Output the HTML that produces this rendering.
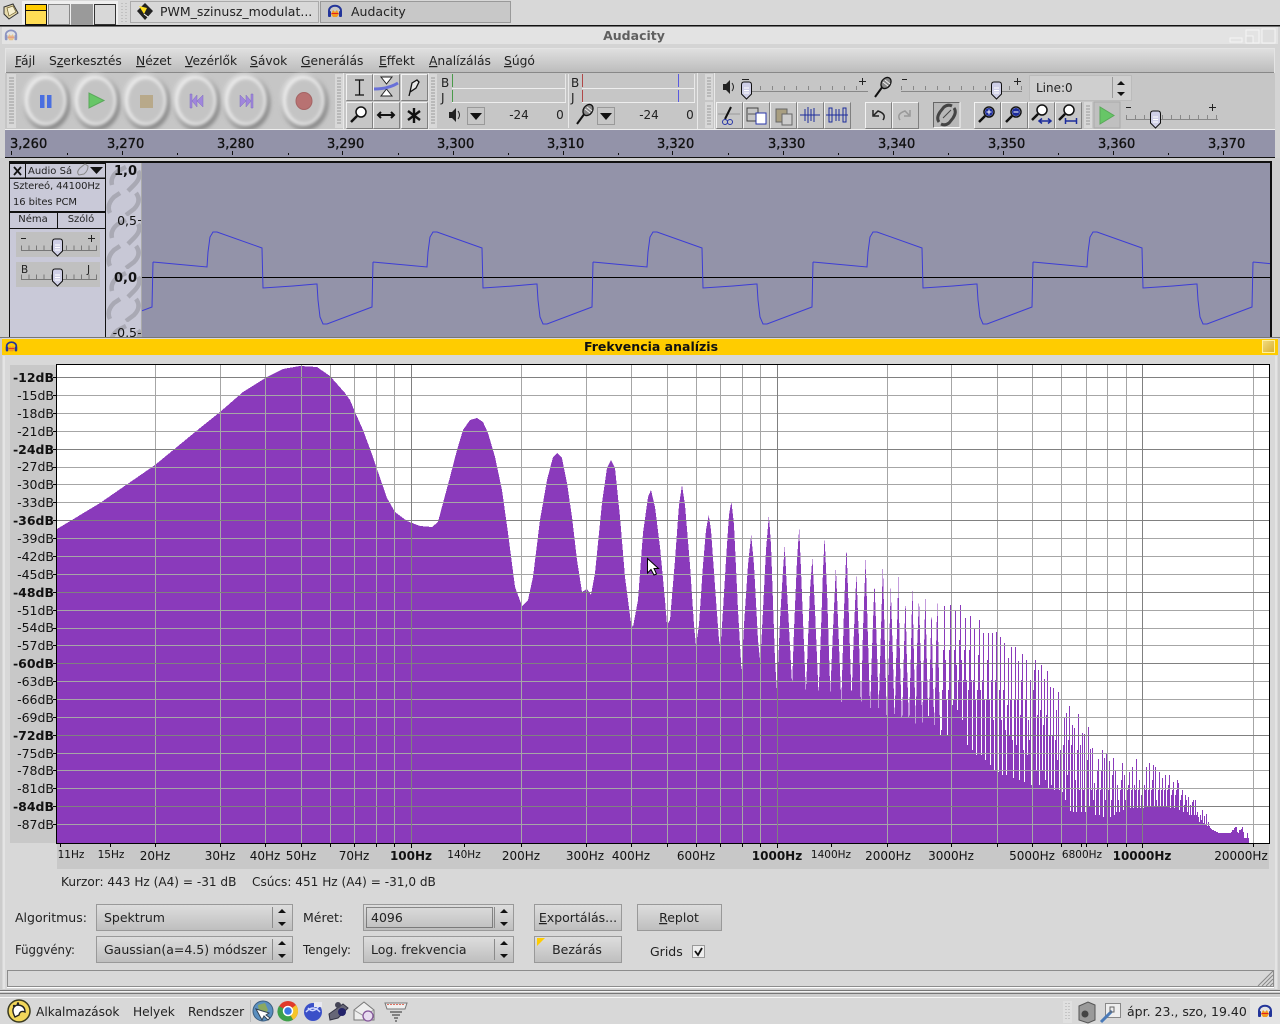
<!DOCTYPE html>
<html><head><meta charset="utf-8"><title>Audacity</title>
<style>html,body{margin:0;padding:0;background:#d8d8d8;overflow:hidden}svg{display:block}text{font-family:"DejaVu Sans","Liberation Sans",sans-serif}</style></head>
<body>
<svg xmlns="http://www.w3.org/2000/svg" width="1280" height="1024" viewBox="0 0 1280 1024" font-size="13" fill="#222">
<defs>
<linearGradient id="g" x1="0" y1="0" x2="0" y2="1"><stop offset="0" stop-color="#dedede"/><stop offset="1" stop-color="#bebebe"/></linearGradient>
<linearGradient id="gm" x1="0" y1="0" x2="0" y2="1"><stop offset="0" stop-color="#e0e0e0"/><stop offset="1" stop-color="#bcbcbc"/></linearGradient>
<linearGradient id="gy" x1="0" y1="0" x2="1" y2="1"><stop offset="0" stop-color="#f2dc80"/><stop offset="1" stop-color="#d8b030"/></linearGradient>
<filter id="bl" x="-30%" y="-30%" width="160%" height="160%"><feGaussianBlur stdDeviation="2"/></filter>
<filter id="bs" x="-30%" y="-30%" width="160%" height="160%"><feGaussianBlur stdDeviation="1.500"/></filter>
<symbol id="rnd" width="56" height="60" overflow="visible"><ellipse cx="29" cy="32" rx="23" ry="27" fill="#7c7c7c" filter="url(#bl)"/><ellipse cx="27" cy="29" rx="22" ry="26" fill="#ececec" filter="url(#bl)"/><ellipse cx="28" cy="30" rx="18" ry="22" fill="#c4c4c4" filter="url(#bs)"/></symbol>
<symbol id="b" width="27" height="27" overflow="visible"><rect width="26" height="26" fill="#c6c6c6"/><path d="M.5 26V.5H26" fill="none" stroke="#f2f2f2"/><path d="M.5 26.5H26.5V.5" fill="none" stroke="#808080"/></symbol>
<symbol id="th" width="14" height="20" overflow="visible"><path d="M1.500 4Q1.500 1 4 1H9Q11.500 1 11.500 4V13L6.500 18L1.500 13Z" fill="#cfcfe6" stroke="#111"/><path d="M4 7H9M4 9.500H9M4 12H9" stroke="#fff"/></symbol>
<symbol id="dd" width="18" height="18" overflow="visible"><rect x=".5" y=".5" width="17" height="17" fill="#c6c6c6" stroke="#999"/><path d="M3 6H15L9 13Z" fill="#111"/></symbol>
<symbol id="aud" viewBox="0 0 16 16" overflow="visible"><path d="M2 12V8C2 1 14 1 14 8V12" fill="none" stroke="#23359a" stroke-width="2"/><rect x="1" y="8" width="3" height="6" rx="1" fill="#23359a"/><rect x="12" y="8" width="3" height="6" rx="1" fill="#23359a"/><path d="M4 11L6 7L8 9L10 7L12 11L10 14H6Z" fill="#f09a20"/><path d="M4.500 10.500H11.500" stroke="#e02020"/></symbol>
<symbol id="zm" width="20" height="20" overflow="visible"><circle cx="12" cy="7" r="5" fill="#fff" stroke="#111" stroke-width="1.500"/><path d="M8 11L2 17" stroke="#111" stroke-width="2.500"/></symbol>
<symbol id="mic" width="20" height="22" overflow="visible"><path d="M1 20L9 9" stroke="#111" stroke-width="2"/><ellipse cx="12" cy="6" rx="4.500" ry="6" transform="rotate(35 12 6)" fill="#888" stroke="#111" stroke-width="1.300"/><path d="M9 5L14 9M11 3L16 7" stroke="#eee"/></symbol>
<symbol id="arr" width="12" height="16" overflow="visible"><path d="M.5 .5V15L4 11.500L7 17L9.500 16L7 10.500H11.500Z" fill="#fff" stroke="#000"/></symbol>
<pattern id="ch" width="35" height="53" patternUnits="userSpaceOnUse" x="106" y="163"><rect width="35" height="53" fill="#c8c8d6"/><g fill="none" stroke="#a9a9b4" stroke-width="4.500"><path d="M6 22Q4 14 12 8L20 4M32 8Q36 14 28 22L22 28"/><path d="M4 50Q0 42 8 34L14 30M30 30Q36 38 28 46L20 52"/></g></pattern>
<clipPath id="wc"><rect x="142" y="163" width="1128" height="175"/></clipPath>
</defs>

<rect width="1280" height="1024" fill="#d8d8d8"/>

<!-- top panel -->
<rect x="0" y="0" width="1280" height="25" fill="#d8d8d8"/>
<path d="M4 7L13 4L18 13L9 19L4 14Z" fill="#e8dcae" stroke="#333"/><path d="M7 8L13 6L16 12L9 16Z" fill="#f6efce" stroke="#6b5c2a" stroke-width=".7"/>
<rect x="22" y="1" width="96" height="23" fill="#efefef"/>
<rect x="25.500" y="4.500" width="21" height="20" fill="#ffdd55" stroke="#111"/><rect x="25.500" y="4.500" width="21" height="6" fill="#ffcc00" stroke="#111"/>
<rect x="48.500" y="4.500" width="21" height="20" fill="#d8d8d8" stroke="#888"/>
<rect x="71" y="4" width="22" height="21" fill="#9a9a9a"/>
<rect x="94.500" y="4.500" width="21" height="20" fill="#d8d8d8" stroke="#333"/>
<path d="M122 3v20M126 3v20" stroke="#aaa" stroke-dasharray="1 2"/>
<rect x="130.500" y="1.500" width="188" height="21" fill="#d8d8d8" stroke="#aaa"/>
<path d="M145 3L153 11L145 20L137 11Z" fill="#222"/><path d="M139 6L147 8L144 14Z" fill="#ffe020"/><path d="M144 14L148 17" stroke="#fff"/>
<text x="160" y="16" font-size="12.500">PWM_szinusz_modulat...</text>
<rect x="320.500" y="1.500" width="190" height="21" fill="#c8c8c8" stroke="#999"/>
<use href="#aud" x="327" y="3" width="16" height="16"/>
<text x="351" y="16" font-size="12.500">Audacity</text>

<!-- main window -->
<rect x="0" y="25" width="1280" height="1.500" fill="#111"/>
<rect x="0" y="27" width="1280" height="311" fill="#d4d4d4"/>
<rect x="2" y="27" width="1276" height="17" fill="#e3e3e3"/>
<use href="#aud" x="4" y="28" width="14" height="14" opacity=".45"/>
<text x="634" y="40" text-anchor="middle" font-weight="bold" font-size="12.500" fill="#606060">Audacity</text>
<rect x="1230" y="38" width="12" height="4" fill="none" stroke="#f4f4f4"/><rect x="1246" y="30" width="13" height="13" fill="none" stroke="#f4f4f4"/><rect x="1246" y="36" width="7" height="7" fill="#ddd" stroke="#f4f4f4"/><rect x="1262" y="29" width="13" height="14" fill="#dedede" stroke="#f4f4f4"/>

<rect x="5.500" y="48.500" width="1269" height="24" fill="url(#gm)" stroke="#e4e4e4"/>
<path d="M6 72.500H1274" stroke="#888"/>
<g font-size="12.300" fill="#222">
<text x="15" y="65"><tspan text-decoration="underline">F</tspan>ájl</text>
<text x="49" y="65">S<tspan text-decoration="underline">z</tspan>erkesztés</text>
<text x="136" y="65"><tspan text-decoration="underline">N</tspan>ézet</text>
<text x="185" y="65"><tspan text-decoration="underline">V</tspan>ezérlők</text>
<text x="250" y="65"><tspan text-decoration="underline">S</tspan>ávok</text>
<text x="301" y="65"><tspan text-decoration="underline">G</tspan>enerálás</text>
<text x="379" y="65"><tspan text-decoration="underline">E</tspan>ffekt</text>
<text x="429" y="65"><tspan text-decoration="underline">A</tspan>nalízálás</text>
<text x="504" y="65"><tspan text-decoration="underline">S</tspan>úgó</text>
</g>

<!-- toolbars -->
<rect x="5" y="73" width="1270" height="56" fill="#c6c6c6"/>
<g fill="none" stroke="#e8e8e8"><path d="M343.500 73V129M428.500 73V129M697.500 73V129M714.500 73V129"/></g>
<g>
<rect x="7" y="74" width="9" height="54" fill="#d8d8d8"/><path d="M9 78H14M9 81H14M9 84H14M9 87H14M9 90H14M9 93H14M9 96H14M9 99H14M9 102H14M9 105H14M9 108H14M9 111H14M9 114H14M9 117H14M9 120H14M9 123H14" stroke="#9a9a9a"/>
<rect x="335" y="74" width="8" height="54" fill="#d8d8d8"/><path d="M337 78H341M337 81H341M337 84H341M337 87H341M337 90H341M337 93H341M337 96H341M337 99H341M337 102H341M337 105H341M337 108H341M337 111H341M337 114H341M337 117H341M337 120H341M337 123H341" stroke="#9a9a9a"/>
<rect x="429" y="74" width="8" height="54" fill="#d8d8d8"/><path d="M431 78H435M431 81H435M431 84H435M431 87H435M431 90H435M431 93H435M431 96H435M431 99H435M431 102H435M431 105H435M431 108H435M431 111H435M431 114H435M431 117H435M431 120H435M431 123H435" stroke="#9a9a9a"/>
<rect x="705" y="74" width="8" height="26" fill="#d8d8d8"/><path d="M707 78H711M707 81H711M707 84H711M707 87H711M707 90H711M707 93H711M707 96H711" stroke="#9a9a9a"/>
<rect x="705" y="102" width="8" height="26" fill="#d8d8d8"/><path d="M707 106H711M707 109H711M707 112H711M707 115H711M707 118H711M707 121H711M707 124H711" stroke="#9a9a9a"/>
<rect x="1084" y="102" width="8" height="26" fill="#d8d8d8"/><path d="M1086 106H1090M1086 109H1090M1086 112H1090M1086 115H1090M1086 118H1090M1086 121H1090M1086 124H1090" stroke="#9a9a9a"/>
</g>
<!-- transport -->
<use href="#rnd" x="18" y="71"/><use href="#rnd" x="68" y="71"/><use href="#rnd" x="118" y="71"/><use href="#rnd" x="168" y="71"/><use href="#rnd" x="218" y="71"/><use href="#rnd" x="276" y="71"/>
<rect x="40" y="95" width="4.500" height="13" fill="#4a6fe0"/><rect x="47" y="95" width="4.500" height="13" fill="#4a6fe0"/>
<path d="M89 93V108L104 100.500Z" fill="#67c667" stroke="#5aa85a"/>
<rect x="140" y="95" width="13" height="13" fill="#b8a98a"/>
<path d="M190 94V108H192V94ZM192 101L197 95V107ZM197 101L203 95V107Z" fill="#a086dc" stroke="#7f6cc0" stroke-width=".5"/>
<path d="M253 94V108H251V94ZM251 101L246 95V107ZM246 101L240 95V107Z" fill="#a086dc" stroke="#7f6cc0" stroke-width=".5"/>
<ellipse cx="304" cy="101" rx="8" ry="8.500" fill="#b87272" stroke="#a56464"/>
<!-- tools -->
<use href="#b" x="346" y="74"/><use href="#b" x="373" y="74"/><use href="#b" x="401" y="74"/><use href="#b" x="346" y="102"/><use href="#b" x="373" y="102"/><use href="#b" x="401" y="102"/>
<path d="M355 80H364M355 95H364M359.500 80V95" stroke="#111" stroke-width="1.300" fill="none"/>
<path d="M381 77H392L386.500 84ZM381 96H392L386.500 89Z" fill="#fff" stroke="#222"/><path d="M374 89C382 89 390 88 398 83" stroke="#6870d8" stroke-width="3" fill="none"/>
<path d="M410 92L412 83L417 80L419 82L416 88ZM410 92L409 96" fill="#e8e8e8" stroke="#111" stroke-width="1.300"/>
<use href="#zm" x="349" y="105"/>
<path d="M378 115H394M381 112L378 115L381 118M391 112L394 115L391 118" stroke="#111" stroke-width="2" fill="none"/>
<path d="M414 108V123M408 111L420 120M420 111L408 120" stroke="#111" stroke-width="2.400"/>
<!-- meters -->
<text x="441" y="87" font-size="12">B</text><text x="441" y="102" font-size="12">J</text>
<text x="571" y="87" font-size="12">B</text><text x="571" y="102" font-size="12">J</text>
<path d="M452 88.500H566M452 102.500H566M582 88.500H695M582 102.500H695" stroke="#eee"/>
<path d="M452.500 74V87M452.500 90V102" stroke="#4a9a4a"/><path d="M582.500 74V87M582.500 90V102" stroke="#b04848"/><path d="M678.500 74V87M678.500 90V102" stroke="#5a5ae0"/>
<path d="M565.500 74V102M694.500 74V102M568.500 74V128" stroke="#e8e8e8"/>
<path d="M449 112H452L456 108V122L452 118H449Z" fill="#222"/><path d="M458 111Q461 115 458 119" stroke="#222" fill="none"/>
<use href="#dd" x="467" y="107"/>
<text x="519" y="119" text-anchor="middle" font-size="12">-24</text><text x="560" y="119" text-anchor="middle" font-size="12">0</text>
<use href="#mic" x="576" y="104"/>
<use href="#dd" x="597" y="107"/>
<text x="649" y="119" text-anchor="middle" font-size="12">-24</text><text x="690" y="119" text-anchor="middle" font-size="12">0</text>
<!-- mixer -->
<path d="M723 84H726L730 80V94L726 90H723Z" fill="#222"/><path d="M732 83Q735 87 732 91" stroke="#222" fill="none"/>
<path d="M748 91.500H868M901 91.500H1022" stroke="#888"/><path d="M748 88H868M901 88H1022" stroke="#888" stroke-dasharray="1 11" stroke-width="4"/>
<path d="M742 79.500H749M859 81.500H866M862.500 78V85M902 79.500H907M1014 81.500H1021M1017.500 78V85" stroke="#222"/>
<use href="#th" x="740" y="81"/><use href="#th" x="990" y="81"/>
<use href="#mic" x="874" y="77"/>
<rect x="1029.500" y="75.500" width="102" height="25" fill="#cfcfcf" stroke="#bbb"/><path d="M1112.500 77V98" stroke="#999"/>
<text x="1036" y="92" font-size="12">Line:0</text>
<path d="M1117 85L1121 81L1125 85ZM1117 92L1121 96L1125 92Z" fill="#111"/>
<!-- edit toolbar -->
<use href="#b" x="716" y="102"/><use href="#b" x="743" y="102"/><use href="#b" x="770" y="102"/><use href="#b" x="797" y="102"/><use href="#b" x="824" y="102"/>
<use href="#b" x="865" y="102"/><use href="#b" x="892" y="102"/>
<use href="#b" x="974" y="102"/><use href="#b" x="1001" y="102"/><use href="#b" x="1028" y="102"/><use href="#b" x="1055" y="102"/>
<rect x="933" y="102" width="27" height="26" fill="#b8b8b8"/><path d="M933.500 128V102.500H960" stroke="#666" fill="none"/><path d="M933.500 127.500H960V102" stroke="#f4f4f4" fill="none"/>
<path d="M718 114H740" stroke="#999"/><path d="M731 107L725 119" stroke="#111" stroke-width="2"/><circle cx="725" cy="122" r="2.500" fill="none" stroke="#2836a8"/><circle cx="730" cy="122" r="2.500" fill="none" stroke="#2836a8"/>
<rect x="747" y="108" width="11" height="13" fill="#c6c6c6" stroke="#444"/><path d="M748 114H757" stroke="#555"/><rect x="756" y="113" width="10" height="11" fill="#fff" stroke="#2836a8"/>
<rect x="776" y="109" width="11" height="13" fill="#a89e80" stroke="#666"/><rect x="782" y="114" width="10" height="11" fill="#ccc" stroke="#666"/>
<path d="M800 115H820M805 109V121M808 107V123M811 109V121M814 108V122" stroke="#1c2c9c"/>
<path d="M826 115H848M829 108V122H832V108ZM843 108V122H846V108ZM836 109V121M839 109V121" stroke="#1c2c9c" fill="none"/>
<path d="M883 120Q887 114 878 111L874 115M873 110V116H879" fill="none" stroke="#222" stroke-width="1.500"/>
<path d="M900 120Q896 114 905 111L909 115M910 110V116H904" fill="none" stroke="#999" stroke-width="1.500"/>
<g fill="none" stroke="#444" stroke-width="3"><path d="M939 122Q936 118 940 112L944 107Q948 104 952 106"/><path d="M954 108Q957 112 953 118L949 123Q945 126 941 124"/><path d="M943 118L951 110" stroke-width="1"/></g>
<use href="#zm" x="977" y="105"/><circle cx="989" cy="112" r="4" fill="#1c2c9c"/><path d="M986.500 112H991.500M989 109.500V114.500" stroke="#fff"/>
<use href="#zm" x="1004" y="105"/><circle cx="1016" cy="112" r="4" fill="#1c2c9c"/><path d="M1013.500 112H1018.500" stroke="#fff"/>
<use href="#zm" x="1030" y="103"/><path d="M1039 121H1051M1042 118.500L1039 121L1042 123.500M1048 118.500L1051 121L1048 123.500" stroke="#1c2c9c" fill="none" stroke-width="1.500"/>
<use href="#zm" x="1057" y="103"/><path d="M1065 121H1077M1065.500 118V124M1076.500 118V124" stroke="#1c2c9c" fill="none" stroke-width="1.500"/>
<rect x="1094" y="102" width="26" height="26" fill="#c0c0c0" stroke="#aaa"/>
<path d="M1100 107V124L1114 115.500Z" fill="#67c667" stroke="#59a859"/>
<path d="M1126 119.500H1218" stroke="#888"/><path d="M1126 117H1218" stroke="#888" stroke-dasharray="1 8" stroke-width="4"/>
<path d="M1126 107.500H1131M1209 107.500H1216M1212.500 104V111" stroke="#222"/>
<use href="#th" x="1149" y="110"/>

<!-- time ruler -->
<rect x="5" y="130" width="1270" height="27" fill="#9393a9"/>
<path d="M5 129.500H1275" stroke="#eee"/>
<g fill="#111" stroke="#111" stroke-width=".35">
<text x="10" y="148">3,260</text><text x="107" y="148">3,270</text><text x="217" y="148">3,280</text><text x="327" y="148">3,290</text><text x="437" y="148">3,300</text><text x="547" y="148">3,310</text><text x="657" y="148">3,320</text><text x="768" y="148">3,330</text><text x="878" y="148">3,340</text><text x="988" y="148">3,350</text><text x="1098" y="148">3,360</text><text x="1208" y="148">3,370</text>
</g>
<path d="M11.500 151V155M122.500 151V155M232.500 151V155M342.500 151V155M453.500 151V155M563.500 151V155M672.500 151V155M783.500 151V155M893.500 151V155M1003.500 151V155M1113.500 151V155M1223.500 151V155M67.500 153V155M177.500 153V155M288.500 153V155M398.500 153V155M508.500 153V155M618.500 153V155M728.500 153V155M838.500 153V155M948.500 153V155M1058.500 153V155M1168.500 153V155" stroke="#111"/>
<rect x="5" y="157" width="1270" height="1.500" fill="#111"/>
<rect x="0" y="158" width="1280" height="180" fill="#cfcfcf"/>

<!-- track -->
<rect x="9" y="161" width="1263" height="177" fill="#111"/>
<rect x="10" y="164" width="15" height="13.500" fill="#c9c9d8"/><path d="M14 167L21 175M21 167L14 175" stroke="#111" stroke-width="1.800"/>
<rect x="26" y="164" width="79" height="13.500" fill="#c9c9d8"/><text x="28" y="174" font-size="10">Audio Sá</text>
<path d="M79 175Q76 172 80 168L85 164L88 166Q88 171 84 174Z" fill="none" stroke="#888"/><path d="M90 167H103L96.500 174Z" fill="#111"/>
<rect x="10" y="179" width="95" height="32" fill="#c9c9d8"/>
<text x="13" y="189" font-size="10" textLength="87">Sztereó, 44100Hz</text><text x="13" y="205" font-size="10" textLength="64">16 bites PCM</text>
<rect x="10" y="213" width="47" height="15" fill="#c9c9d8"/><rect x="58" y="213" width="47" height="15" fill="#c9c9d8"/>
<text x="33" y="222" text-anchor="middle" font-size="10">Néma</text><text x="81" y="222" text-anchor="middle" font-size="10">Szóló</text>
<rect x="10" y="229" width="95" height="109" fill="#c9c9d8"/>
<rect x="16" y="232" width="84" height="25" fill="#c0c0c0"/><rect x="16" y="262" width="84" height="25" fill="#c0c0c0"/>
<path d="M21 250.500H97M21 279.500H97" stroke="#777"/><path d="M21 248H97M21 277H97" stroke="#777" stroke-dasharray="1 6.500" stroke-width="5"/>
<path d="M21 238.500H26M88 238.500H95M91.500 235V242" stroke="#222"/>
<text x="21" y="273" font-size="10.500">B</text><text x="87" y="273" font-size="10.500">J</text>
<use href="#th" x="51" y="238"/><use href="#th" x="51" y="268"/>
<rect x="106" y="163" width="35.500" height="175" fill="url(#ch)"/>
<rect x="142" y="163" width="1128" height="175" fill="#9393a9"/>
<path d="M141.500 163V338" stroke="#aaa"/>
<g fill="#111"><text x="137" y="175" text-anchor="end" font-weight="bold" font-size="13" font-family="Liberation Serif">1,0</text><text x="137" y="225" text-anchor="end" font-size="12.500">0,5</text><text x="137" y="282" text-anchor="end" font-weight="bold" font-size="13">0,0</text><text x="137" y="337" text-anchor="end" font-size="12.500">-0,5</text></g>
<path d="M138 220.500H141M138 333.500H141" stroke="#222"/>
<path d="M142 277.500H1270" stroke="#000"/>
<g clip-path="url(#wc)" fill="none" stroke="#3c3cd6" stroke-width="1">
<path id="w" d="M153 262L207 267L208 252L210 237L213 232L217 232L262 248L263 288L293 286L316 284L317 284L318 300L320 317L323 324L327 324L372 307L373 262"/>
<use href="#w" x="-220"/><use href="#w" x="220"/><use href="#w" x="440"/><use href="#w" x="660"/><use href="#w" x="880"/><use href="#w" x="1100"/>
</g>

<!-- dialog -->
<rect x="0" y="337" width="1280" height="660" fill="#cccccc"/>
<rect x="2" y="338" width="1276" height="656" fill="#d8d8d8"/>
<path d="M0 337.500H1280" stroke="#777"/>
<rect x="2" y="339" width="1276" height="16" fill="#ffcc00"/>
<use href="#aud" x="5" y="340" width="13" height="13"/>
<text x="651" y="351" text-anchor="middle" font-weight="bold" font-size="12.500" fill="#111">Frekvencia analízis</text>
<rect x="1262.500" y="340.500" width="12" height="12" fill="url(#gy)" stroke="#fff2a0"/>
<path d="M4 356V990M1276 356V990" stroke="#f0f0f0" fill="none"/>

<!-- plot -->
<rect x="10" y="365" width="47" height="478" fill="#c8c8c8"/>
<rect x="57" y="844" width="1212" height="25" fill="#c8c8c8"/>
<rect x="57" y="365" width="1212" height="478" fill="#fff"/>
<path fill="#8a3abb" shape-rendering="crispEdges" d="M57 843V529L100 503L155 465L200 428L220 412L243 392L267 377L283 369L300 366L317 367L330 376L345 393L350 400L355 412L363 430L373 457L378 472L387 498L395 512L407 521L420 526L432 527L438 522L443 503L450 477L457 450L463 430L470 420L477 418L483 422L488 433L495 457L502 490L508 533L515 587L522 606L528 600L533 577L540 520L547 480L553 457L557 453L562 458L567 483L572 517L577 560L582 592L587 589L591 595L595 573L602 503L607 468L611 460L615 468L620 517L625 577L631 623L633 627L638 600L643 533L648 497L651 490L655 507L660 547L665 600L667 625L670 620L675 560L679 505L682 485L685 505L690 565L694 625L696 646L699 625L703 565L706 530L708.700 515L711 530L716 600L719 640L720.500 648L723 610L726 560L729 515L731.400 501L734 525L738 610L741.600 672L744 625L748 565L751.200 535L754 565L758 640L760.300 663L763 610L766 550L768.900 515L771 545L775 660L777 692L780 620L783 570L784.700 546L787 590L792.100 685L794 630L797 560L799.200 528L801 570L805.900 693L808 640L810 590L812.400 557L815 610L818.600 695L821 630L823 570L824.600 537L827 590L830.300 693L833 630L835.900 567L838 620L841.300 703L844 610L846.500 546L849 620L851.500 698L854 630L856.400 573L859 640L861.100 708L863 630L865.700 558L868 640L870.200 710L872 650L874.500 582L877 650L878.700 710L881 630L882.900 564L885 650L886.900 720L889 650L890.800 587L893 660L894.600 720L897 630L898.300 575L900 660L902 725L904 650L905.500 597L907 665L909 725L911 650L912.400 584L914 660L915.800 725L917 650L919 597L921 670L922.200 725L924 650L925.400 593L927 670L928.500 725L930 670L931.500 607L933 680L934.400 730L936 650L937.400 598L939 680L940.200 735H941V730h1V690h1V650h1V606h1V660h1V700h1V735h1V690h1V650h1V605h1V660h1V705h1V700h1V650h1V611h1V665h1V710h1V680h1V640h1V605h1V660h1V720h1V680h1V650h1V618h1V680h1V745h1V690h1V650h1V616h1V680h1V750h1V680h1V629h1V700h1V755h1V690h1V655h1V620h1V690h1V755h1V680h1V633h1V700h1V760h1V700h1V660h1V633h1V700h1V765h1V680h1V633h1V720h1V770h1V680h1V632h1V700h1V772h1V690h1V637h1V720h1V775h1V690h1V643h1V730h1V775h1V705h1V658h1V735h1V700h1V647h1V740h1V778h1V700h1V647h1V745h1V700h1V661h1V780h1V715h1V680h1V654h1V750h1V782h1V700h1V660h1V755h1V720h1V740h1V680h1V785h1V720h1V690h1V670h1V660h1V770h1V715h1V670h1V785h1V710h1V665h1V770h1V725h1V679h1V780h1V715h1V671h1V788h1V735h1V687h1V785h1V735h1V688h1V790h1V740h1V710h1V760h1V692h1V790h1V750h1V725h1V792h1V745h1V718h1V800h1V713h1V775h1V740h1V706h1V811h1V745h1V725h1V812h1V728h1V780h1V812h1V750h1V714h1V790h1V745h1V812h1V733h1V790h1V734h1V812h1V790h1V760h1V727h1V806h1V749h1V790h1V748h1V800h1V783h1V815h1V790h1V770h1V759h1V815h1V790h1V770h1V750h1V817h1V758h1V800h1V754h1V817h1V790h1V761h1V817h1V800h1V775h1V758h1V815h1V770h1V812h1V785h1V800h1V812h1V790h1V780h1V763h1V810h1V775h1V800h1V808h1V790h1V785h1V772h1V808h1V790h1V767h1V808h1V785h1V790h1V759h1V808h1V790h1V780h1V808h1V795h1V774h1V808h1V785h1V790h1V767h1V806h1V790h1V763h1V806h1V790h1V780h1V765h1V806h1V767h1V800h1V806h1V790h1V772h1V806h1V790h1V778h1V807h1V790h1V775h1V806h1V790h1V785h1V775h1V808h1V795h1V790h1V782h1V808h1V795h1V790h1V780h1V783h1V810h1V800h1V795h1V790h1V812h1V805h1V795h1V800h1V812h1V797h1V815h1V805h1V815h1V802h1V800h1V815h1V800h1V815h1V812h1V817h1V822h1V815h1V820h1V810h1V823h1V816h1V824h1V814h1V826h1V822h1V826h1V828h1V829h1V830h2V831h2V832h2V833h13V832h1V830h2V828h1V827h2V832h1V833h1V830h2V829h1V827h1V832h1V838h3V833h1V838h1V843Z"/>
<g shape-rendering="crispEdges" fill="none">
<path stroke="#a6a6a6" d="M155.500 365V843M220.500 365V843M265.500 365V843M301.500 365V843M330.500 365V843M354.500 365V843M376.500 365V843M394.500 365V843M521.500 365V843M586.500 365V843M631.500 365V843M667.500 365V843M696.500 365V843M720.500 365V843M742.500 365V843M760.500 365V843M887.500 365V843M951.500 365V843M997.500 365V843M1032.500 365V843M1061.500 365V843M1086.500 365V843M1107.500 365V843M1126.500 365V843M1253.500 365V843"/>
<path stroke="#a6a6a6" d="M57 395.500H1269M57 413.500H1269M57 431.500H1269M57 467.500H1269M57 484.500H1269M57 502.500H1269M57 538.500H1269M57 556.500H1269M57 574.500H1269M57 610.500H1269M57 628.500H1269M57 645.500H1269M57 681.500H1269M57 699.500H1269M57 717.500H1269M57 753.500H1269M57 770.500H1269M57 788.500H1269M57 824.500H1269"/>
<path stroke="#808080" d="M57 377.500H1269M57 449.500H1269M57 520.500H1269M57 592.500H1269M57 663.500H1269M57 735.500H1269M57 806.500H1269M411.500 365V843M777.500 365V843M1142.500 365V843"/>
<rect x="56.500" y="364.500" width="1213" height="479" stroke="#000"/>
<path stroke="#000" d="M53 377.500H57M53 395.500H57M53 413.500H57M53 431.500H57M53 449.500H57M53 467.500H57M53 484.500H57M53 502.500H57M53 520.500H57M53 538.500H57M53 556.500H57M53 574.500H57M53 592.500H57M53 610.500H57M53 628.500H57M53 645.500H57M53 663.500H57M53 681.500H57M53 699.500H57M53 717.500H57M53 735.500H57M53 753.500H57M53 770.500H57M53 788.500H57M53 806.500H57M53 824.500H57"/>
<path stroke="#000" d="M60.500 844V847M110.500 844V847M155.500 844V847M220.500 844V847M265.500 844V847M301.500 844V847M330.500 844V847M354.500 844V847M376.500 844V847M394.500 844V847M411.500 844V848M464.500 844V847M521.500 844V847M586.500 844V847M631.500 844V847M667.500 844V847M696.500 844V847M720.500 844V847M742.500 844V847M760.500 844V847M777.500 844V848M831.500 844V847M887.500 844V847M951.500 844V847M997.500 844V847M1032.500 844V847M1061.500 844V847M1081.500 844V847M1086.500 844V847M1107.500 844V847M1126.500 844V847M1142.500 844V848M1253.500 844V847"/>
</g>
<g text-anchor="end" fill="#111" font-size="12.500">
<text x="54" y="382" font-weight="bold">-12dB</text><text x="54" y="400">-15dB</text><text x="54" y="418">-18dB</text><text x="54" y="436">-21dB</text><text x="54" y="454" font-weight="bold">-24dB</text><text x="54" y="471">-27dB</text><text x="54" y="489">-30dB</text><text x="54" y="507">-33dB</text><text x="54" y="525" font-weight="bold">-36dB</text><text x="54" y="543">-39dB</text><text x="54" y="561">-42dB</text><text x="54" y="579">-45dB</text><text x="54" y="597" font-weight="bold">-48dB</text><text x="54" y="615">-51dB</text><text x="54" y="632">-54dB</text><text x="54" y="650">-57dB</text><text x="54" y="668" font-weight="bold">-60dB</text><text x="54" y="686">-63dB</text><text x="54" y="704">-66dB</text><text x="54" y="722">-69dB</text><text x="54" y="740" font-weight="bold">-72dB</text><text x="54" y="758">-75dB</text><text x="54" y="775">-78dB</text><text x="54" y="793">-81dB</text><text x="54" y="811" font-weight="bold">-84dB</text><text x="54" y="829">-87dB</text>
</g>
<g text-anchor="middle" fill="#111" font-size="12">
<text x="71" y="858" font-size="10.500">11Hz</text><text x="111" y="858" font-size="10.500">15Hz</text><text x="155" y="860">20Hz</text><text x="220" y="860">30Hz</text><text x="265" y="860">40Hz</text><text x="301" y="860">50Hz</text><text x="354" y="860">70Hz</text><text x="411" y="860" font-weight="bold">100Hz</text><text x="464" y="858" font-size="10.500">140Hz</text><text x="521" y="860">200Hz</text><text x="585" y="860">300Hz</text><text x="631" y="860">400Hz</text><text x="696" y="860">600Hz</text><text x="777" y="860" font-weight="bold">1000Hz</text><text x="831" y="858" font-size="10.500">1400Hz</text><text x="888" y="860">2000Hz</text><text x="951" y="860">3000Hz</text><text x="1032" y="860">5000Hz</text><text x="1082" y="858" font-size="10.500">6800Hz</text><text x="1142" y="860" font-weight="bold">10000Hz</text><text x="1241" y="860">20000Hz</text>
</g>
<use href="#arr" x="647" y="558"/>

<text x="61" y="886" font-size="12.100">Kurzor: 443 Hz (A4) = -31 dB</text>
<text x="252" y="886" font-size="12.100">Csúcs: 451 Hz (A4) = -31,0 dB</text>

<!-- controls -->
<g font-size="12.500">
<text x="15" y="922">Algoritmus:</text><text x="15" y="954" textLength="60" lengthAdjust="spacingAndGlyphs">Függvény:</text>
<text x="303" y="922">Méret:</text><text x="303" y="954" textLength="48" lengthAdjust="spacingAndGlyphs">Tengely:</text>
</g>
<g stroke="#999" fill="url(#g)">
<rect x="96.500" y="904.500" width="196" height="26"/><rect x="96.500" y="936.500" width="196" height="26"/><rect x="363.500" y="904.500" width="150" height="26"/><rect x="363.500" y="936.500" width="150" height="26"/>
<rect x="534.500" y="904.500" width="87" height="26"/><rect x="534.500" y="936.500" width="87" height="26"/><rect x="637.500" y="904.500" width="84" height="26"/>
</g>
<path d="M272.500 907V928M272.500 939V960M494.500 907V928M494.500 939V960" stroke="#8a8a8a"/>
<path d="M278 913L282 909L286 913ZM278 922L282 926L286 922ZM278 945L282 941L286 945ZM278 954L282 958L286 954ZM500 913L504 909L508 913ZM500 922L504 926L508 922ZM500 945L504 941L508 945ZM500 954L504 958L508 954Z" fill="#111"/>
<rect x="366.500" y="907.500" width="126" height="20" fill="none" stroke="#333" stroke-dasharray="1 1"/>
<g font-size="12.500">
<text x="104" y="922">Spektrum</text><text x="104" y="954">Gaussian(a=4.5) módszer</text><text x="371" y="922">4096</text><text x="371" y="954">Log. frekvencia</text>
<text x="578" y="922" text-anchor="middle"><tspan text-decoration="underline">E</tspan>xportálás...</text>
<text x="679" y="922" text-anchor="middle"><tspan text-decoration="underline">R</tspan>eplot</text>
<text x="577" y="954" text-anchor="middle">Bezárás</text>
<text x="650" y="956">Grids</text>
</g>
<path d="M537 938H545L537 946Z" fill="#ffcc00"/>
<rect x="692.500" y="945.500" width="12" height="12" fill="#eee" stroke="#999"/><path d="M695 951L698 955L702 948" fill="none" stroke="#111" stroke-width="1.800"/>

<!-- status bar -->
<rect x="7.500" y="970.500" width="1266" height="16" fill="#d8d8d8" stroke="#8c8c8c"/>
<path d="M7 987.500H1274" stroke="#fff"/>
<path d="M1258 986L1273 971M1262 986L1273 975M1266 986L1273 979M1270 986L1273 983" stroke="#888"/>
<path d="M0 989.500H1280M0 992.500H1280" stroke="#ccc"/><path d="M0 990.500H1280M0 993.500H1280" stroke="#777"/><path d="M0 991.500H1280" stroke="#f2f2f2"/>

<!-- bottom panel -->
<rect x="0" y="997" width="1280" height="27" fill="#d8d8d8"/>
<path d="M0 997.500H1280" stroke="#f6f6f6"/>
<circle cx="19" cy="1011" r="11" fill="#f1d65a" stroke="#3a3a20" stroke-width="1.500"/><path d="M15 1017Q10 1008 17 1005Q25 1005 25 1012Q20 1010 19 1015Z" fill="#fff" stroke="#222" stroke-width="1.400"/><circle cx="14" cy="1006" r="1.200" fill="#222"/><circle cx="18" cy="1003.500" r="1.200" fill="#222"/>
<g font-size="12.200">
<text x="36" y="1016">Alkalmazások</text><text x="133" y="1016">Helyek</text><text x="188" y="1016">Rendszer</text>
</g>
<text x="1127" y="1016" font-size="12.500">ápr. 23., szo, 19.40</text>
<path d="M250.500 1000V1022" stroke="#bbb"/>
<circle cx="263" cy="1011" r="10" fill="#5a8fc0" stroke="#3d5f80"/><path d="M258 1005L265 1003L268 1010L263 1018L259 1012Z" fill="#8aa860"/><path d="M256 1009L262 1020L264 1016L268 1020L270 1018L266 1015L269 1013Z" fill="#fff" stroke="#345"/>
<circle cx="288" cy="1011" r="10" fill="#e03a2a"/><path d="M288 1011L296 1005A10 10 0 0 1 293 1019.700Z" fill="#f6c52a"/><path d="M288 1011L293 1019.700A10 10 0 0 1 279 1006Z" fill="#3ea04a"/><circle cx="288" cy="1011" r="4.500" fill="#3b78e0" stroke="#fff" stroke-width="1.500"/>
<circle cx="313" cy="1012" r="9" fill="#3a50c8"/><path d="M306 1012Q313 1004 320 1012M308 1008Q313 1014 319 1006" stroke="#cfd8ff" fill="none" stroke-width="1.500"/><path d="M314 1002H322V1007H314Z" fill="#e8e8f0"/>
<path d="M329 1014L343 1004L348 1008L338 1018L330 1020Z" fill="#667" stroke="#334"/><circle cx="342" cy="1012" r="4" fill="#23236a"/><circle cx="338" cy="1005" r="3" fill="#445"/>
<path d="M354 1010L364 1002L374 1010V1020H354Z" fill="#eee" stroke="#777"/><path d="M354 1010L364 1016L374 1010" fill="none" stroke="#999"/><circle cx="368" cy="1016" r="5" fill="#e8dcf0" stroke="#84569a" stroke-width="1.300"/>
<path d="M385 1003H407L405 1009H387Z" fill="#f0f0f0" stroke="#777"/><path d="M387 1004.500H405" stroke="#e07060" stroke-dasharray="2 1"/><path d="M390 1012H402M392 1015H400M394 1018H398M395 1021H397" stroke="#666" stroke-width="1.500"/>
<rect x="1063" y="1001" width="9" height="22" fill="#e0e0e0"/><path d="M1066 1003V1021M1069 1003V1021" stroke="#aaa" stroke-dasharray="1 2"/>
<path d="M1079 1006L1088 1002L1095 1005V1020L1088 1023L1079 1020Z" fill="#9a9a9a" stroke="#555"/><circle cx="1085" cy="1014" r="3.500" fill="#444"/>
<rect x="1105.500" y="1003.500" width="15" height="14" fill="#eee" stroke="#888"/><path d="M1101 1022L1112 1011" stroke="#4a7ab8" stroke-width="3"/><rect x="1110" y="1007" width="4" height="5" fill="none" stroke="#666"/>
<rect x="1250" y="998" width="30" height="26" fill="#e4e4e4"/>
<use href="#aud" x="1257" y="1003" width="16" height="16"/>
</svg>
</body></html>
